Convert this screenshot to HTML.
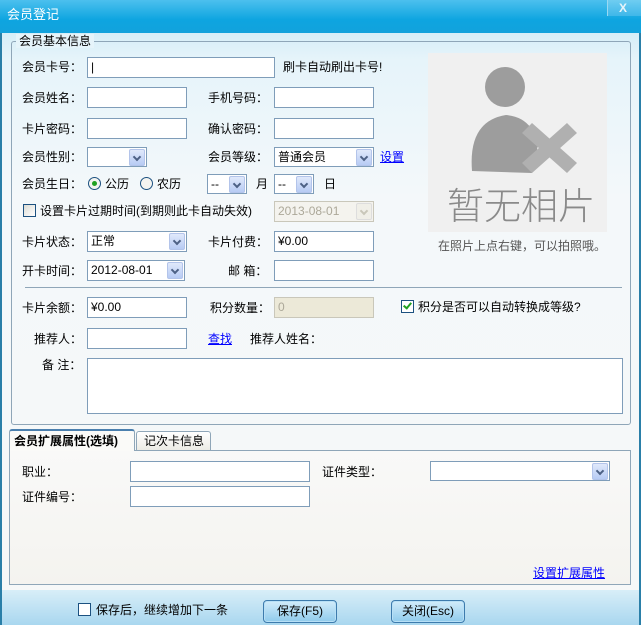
<!DOCTYPE html>
<html><head><meta charset="utf-8">
<style>
*{margin:0;padding:0;box-sizing:border-box}
body{width:641px;height:625px;position:relative;overflow:hidden;font-family:"Liberation Sans","Noto Sans CJK SC",sans-serif;font-size:12px;color:#000;background:linear-gradient(#d6eef8 33px,#e6f4fa 60px,#f4f8fa 200px,#f6f8f8 100%)}
.a{position:absolute;white-space:nowrap;line-height:14px}
.in{position:absolute;background:#fff;border:1px solid #7f9db9;height:21px;padding-left:3px;line-height:19px;font-size:12px}
.dis{background:#ece9d8;border-color:#c9c7ba;color:#aca899}
.dd{position:absolute;right:1px;top:1px;width:16px;height:17px;background:linear-gradient(#e0e9fb,#b7cbf4);border:1px solid #b3c4ea;border-radius:2px}
.dd:after{content:"";position:absolute;left:4px;top:4px;width:4px;height:4px;border-right:2px solid #4d6185;border-bottom:2px solid #4d6185;transform:rotate(45deg)}
.dis .dd{background:#f0efe8;border-color:#ddd}
.dis .dd:after{border-color:#c9c7ba}
.lk{color:#0000ff;text-decoration:underline}
.cb{position:absolute;width:13px;height:13px;border:1px solid #1c5180;background:linear-gradient(135deg,#dcdcd5,#fff)}
.rd{position:absolute;width:13px;height:13px;border:1px solid #1c5180;border-radius:50%;background:#f4f4f0}
.btn{position:absolute;width:74px;height:23px;border:1px solid #3d7bad;border-radius:4px;background:linear-gradient(#d2ecfa,#8fcbec);text-align:center;line-height:21px;font-size:12px;box-shadow:inset 0 0 0 1px #b8e0f6}
</style></head><body>
<div style="position:absolute;left:0;top:0;width:641px;height:33px;background:linear-gradient(#4cc0ee,#0ea5e0 60%,#12a2dc)"></div>
<div class="a" style="left:7px;top:8px;color:#fff;font-size:13px">会员登记</div>
<div style="position:absolute;left:607px;top:0;width:34px;height:16px;background:linear-gradient(#6fcdf1,#3eb7e9);border-left:1px solid #9ad9f3"></div>
<div class="a" style="left:619px;top:1px;color:#e8f4fa;font-weight:bold;font-size:12px">X</div>
<div style="position:absolute;left:0;top:33px;width:2px;height:592px;background:#2a7fa8"></div>
<div style="position:absolute;right:0;top:33px;width:2px;height:592px;background:#2a7fa8"></div>

<div style="position:absolute;left:11px;top:41px;width:620px;height:384px;border:1px solid #8fa6b8;border-radius:3px"></div>
<div class="a" style="left:16px;top:34px;padding:0 3px;background:#e6f4fa">会员基本信息</div>

<div class="a" style="left:22px;top:60px">会员卡号：</div>
<div class="in" style="left:87px;top:57px;width:188px">|</div>
<div class="a" style="left:283px;top:60px">刷卡自动刷出卡号!</div>

<div class="a" style="left:22px;top:91px">会员姓名：</div>
<div class="in" style="left:87px;top:87px;width:100px"></div>
<div class="a" style="left:208px;top:91px">手机号码：</div>
<div class="in" style="left:274px;top:87px;width:100px"></div>

<div class="a" style="left:22px;top:122px">卡片密码：</div>
<div class="in" style="left:87px;top:118px;width:100px"></div>
<div class="a" style="left:208px;top:122px">确认密码：</div>
<div class="in" style="left:274px;top:118px;width:100px"></div>

<div class="a" style="left:22px;top:150px">会员性别：</div>
<div class="in" style="left:87px;top:147px;width:60px;height:20px"><div class="dd"></div></div>
<div class="a" style="left:208px;top:150px">会员等级：</div>
<div class="in" style="left:274px;top:147px;width:100px;height:20px">普通会员<div class="dd"></div></div>
<div class="a lk" style="left:380px;top:150px">设置</div>

<div class="a" style="left:22px;top:177px">会员生日：</div>
<div class="rd" style="left:88px;top:177px"><div style="position:absolute;left:3px;top:3px;width:5px;height:5px;border-radius:50%;background:#21a121"></div></div>
<div class="a" style="left:105px;top:177px">公历</div>
<div class="rd" style="left:140px;top:177px"></div>
<div class="a" style="left:157px;top:177px">农历</div>
<div class="in" style="left:207px;top:174px;width:40px;height:20px">--<div class="dd"></div></div>
<div class="a" style="left:256px;top:177px">月</div>
<div class="in" style="left:274px;top:174px;width:40px;height:20px">--<div class="dd"></div></div>
<div class="a" style="left:324px;top:177px">日</div>

<div class="cb" style="left:23px;top:204px"></div>
<div class="a" style="left:40px;top:204px">设置卡片过期时间(到期则此卡自动失效)</div>
<div class="in dis" style="left:274px;top:201px;width:100px;height:21px;background:#f4f3ee">2013-08-01<div class="dd"></div></div>

<div class="a" style="left:22px;top:235px">卡片状态：</div>
<div class="in" style="left:87px;top:231px;width:100px">正常<div class="dd"></div></div>
<div class="a" style="left:208px;top:235px">卡片付费：</div>
<div class="in" style="left:274px;top:231px;width:100px">¥0.00</div>

<div class="a" style="left:22px;top:264px">开卡时间：</div>
<div class="in" style="left:87px;top:260px;width:98px">2012-08-01<div class="dd"></div></div>
<div class="a" style="left:228px;top:264px">邮 箱：</div>
<div class="in" style="left:274px;top:260px;width:100px"></div>

<div style="position:absolute;left:428px;top:53px;width:179px;height:179px;background:#f0f0f0"></div>
<svg style="position:absolute;left:428px;top:53px" width="179" height="179">
<circle cx="77" cy="34" r="20" fill="#9d9d9d"/>
<path d="M44 118 Q40 68 78 62 Q104 64 110 92 L104 120 Z" fill="#9d9d9d"/>
<path d="M94 80 L104 70 L149 110 L139 120 Z M94 110 L139 70 L149 80 L104 120 Z" fill="#b0b0b0"/>
<text x="93" y="166" text-anchor="middle" font-size="37" fill="#8a8a8a" font-family="Noto Sans CJK SC,sans-serif" font-weight="300">暂无相片</text>
</svg>
<div class="a" style="left:438px;top:239px;color:#555">在照片上点右键，可以拍照哦。</div>

<div style="position:absolute;left:25px;top:287px;width:597px;height:1px;background:#8fa6b8"></div>

<div class="a" style="left:22px;top:301px">卡片余额：</div>
<div class="in" style="left:87px;top:297px;width:100px">¥0.00</div>
<div class="a" style="left:210px;top:301px">积分数量：</div>
<div class="in dis" style="left:274px;top:297px;width:100px">0</div>
<div class="cb" style="left:401px;top:300px;background:#fff"><div style="position:absolute;left:3px;top:0px;width:5px;height:8px;border-right:2px solid #21a121;border-bottom:2px solid #21a121;transform:rotate(40deg)"></div></div>
<div class="a" style="left:418px;top:300px">积分是否可以自动转换成等级?</div>

<div class="a" style="left:34px;top:332px">推荐人：</div>
<div class="in" style="left:87px;top:328px;width:100px"></div>
<div class="a lk" style="left:208px;top:332px">查找</div>
<div class="a" style="left:250px;top:332px">推荐人姓名：</div>

<div class="a" style="left:42px;top:358px">备 注：</div>
<div class="in" style="left:87px;top:358px;width:536px;height:56px"></div>

<div style="position:absolute;left:9px;top:450px;width:622px;height:135px;border:1px solid #8fa6b8;background:linear-gradient(#f9f9f8,#f4f3ef)"></div>
<div style="position:absolute;left:9px;top:429px;width:126px;height:22px;border:1px solid #8fa6b8;border-bottom:none;border-top:2px solid #4a7fae;border-radius:3px 3px 0 0;background:#fafaf8"></div>
<div class="a" style="left:14px;top:434px;font-weight:bold">会员扩展属性(选填)</div>
<div style="position:absolute;left:136px;top:431px;width:75px;height:19px;border:1px solid #8fa6b8;border-bottom:none;border-radius:3px 3px 0 0;background:linear-gradient(#fff,#ecebe5)"></div>
<div class="a" style="left:144px;top:434px">记次卡信息</div>

<div class="a" style="left:22px;top:465px">职业：</div>
<div class="in" style="left:130px;top:461px;width:180px"></div>
<div class="a" style="left:322px;top:465px">证件类型：</div>
<div class="in" style="left:430px;top:461px;width:180px;height:20px"><div class="dd"></div></div>
<div class="a" style="left:22px;top:490px">证件编号：</div>
<div class="in" style="left:130px;top:486px;width:180px"></div>
<div class="a lk" style="left:533px;top:566px">设置扩展属性</div>

<div style="position:absolute;left:2px;top:590px;width:637px;height:35px;background:linear-gradient(#d8eef8,#a9d7ef)"></div>
<div class="cb" style="left:78px;top:603px;background:#fff"></div>
<div class="a" style="left:96px;top:603px">保存后，继续增加下一条</div>
<div class="btn" style="left:263px;top:600px">保存(F5)</div>
<div class="btn" style="left:391px;top:600px">关闭(Esc)</div>
</body></html>
